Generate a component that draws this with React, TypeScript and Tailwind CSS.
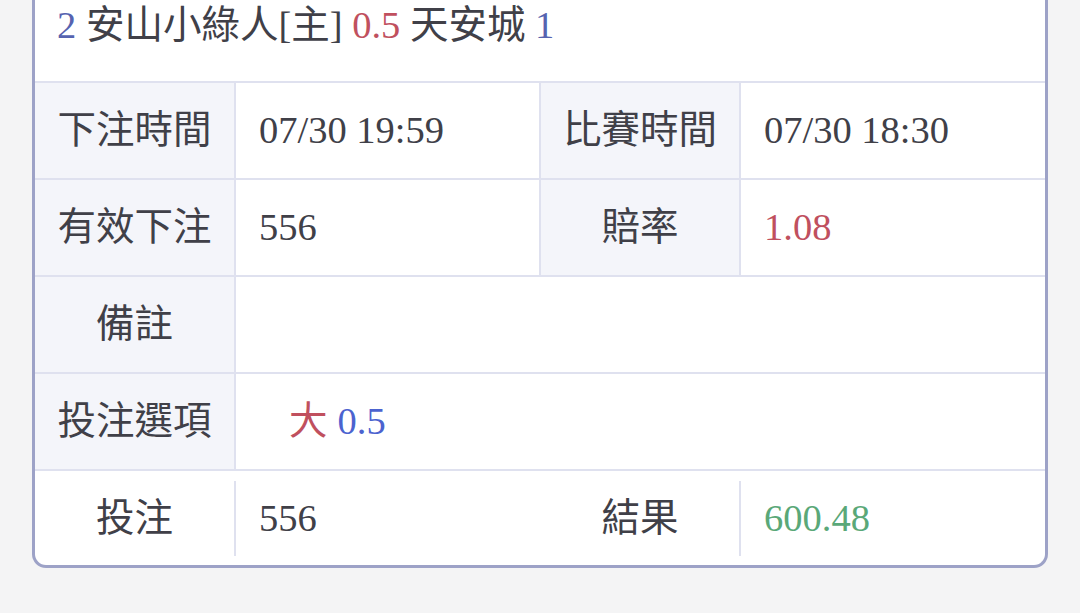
import React from 'react';

const font = { fontFamily: '"Liberation Serif", "Noto Sans CJK TC", serif' };

const labelCell =
  'flex items-center justify-center bg-[#f4f5fa] border-r-2 border-[#dfe1ef] text-[#404048]';
const valueCell = 'flex items-center pl-[23px] border-r-2 border-[#dfe1ef] text-[#404048]';

export default function App() {
  return (
    <div
      className="min-h-[613px] w-full bg-[#f4f4f5] text-[38.5px] leading-none"
      style={font}
    >
      <div className="ml-[32px] w-[1016px] border-x-[3px] border-b-[3px] border-[#9da2c7] rounded-b-[14px] bg-white overflow-hidden">
        {/* Match header */}
        <div className="h-[83px] pl-[22px] pt-[5px] text-[#404048] leading-[40px] border-b-2 border-[#dfe1ef]">
          <span className="text-[#5663b0]">2</span> 安山小綠人[主]{' '}
          <span className="text-[#c0505e]">0.5</span> 天安城{' '}
          <span className="text-[#5663b0]">1</span>
        </div>

        {/* Times */}
        <div className="flex h-[97px] border-b-2 border-[#dfe1ef]">
          <div className={`${labelCell} w-[201px]`}>下注時間</div>
          <div className={`${valueCell} w-[305px]`}>07/30 19:59</div>
          <div className={`${labelCell} w-[200px]`}>比賽時間</div>
          <div className="flex flex-1 items-center pl-[23px] text-[#404048]">07/30 18:30</div>
        </div>

        {/* Stake / odds */}
        <div className="flex h-[97px] border-b-2 border-[#dfe1ef]">
          <div className={`${labelCell} w-[201px]`}>有效下注</div>
          <div className={`${valueCell} w-[305px]`}>556</div>
          <div className={`${labelCell} w-[200px]`}>賠率</div>
          <div className="flex flex-1 items-center pl-[23px] text-[#c0505e]">1.08</div>
        </div>

        {/* Note */}
        <div className="flex h-[97px] border-b-2 border-[#dfe1ef]">
          <div className={`${labelCell} w-[201px]`}>備註</div>
          <div className="flex-1" />
        </div>

        {/* Option */}
        <div className="flex h-[97px] border-b-2 border-[#dfe1ef]">
          <div className={`${labelCell} w-[201px]`}>投注選項</div>
          <div className="flex flex-1 items-center pl-[53px]">
            <span className="text-[#c0505e]">大</span>
            <span className="ml-[10px] text-[#4c63cf]">0.5</span>
          </div>
        </div>

        {/* Result */}
        <div className="flex h-[94px] items-center text-[#404048]">
          <div className="flex w-[199px] justify-center">投注</div>
          <div className="h-[75px] w-[2px] bg-[#dfe1ef]" />
          <div className="w-[305px] pl-[23px]">556</div>
          <div className="flex w-[198px] justify-center">結果</div>
          <div className="h-[75px] w-[2px] bg-[#dfe1ef]" />
          <div className="flex-1 pl-[23px] text-[#5aa878]">600.48</div>
        </div>
      </div>
    </div>
  );
}
